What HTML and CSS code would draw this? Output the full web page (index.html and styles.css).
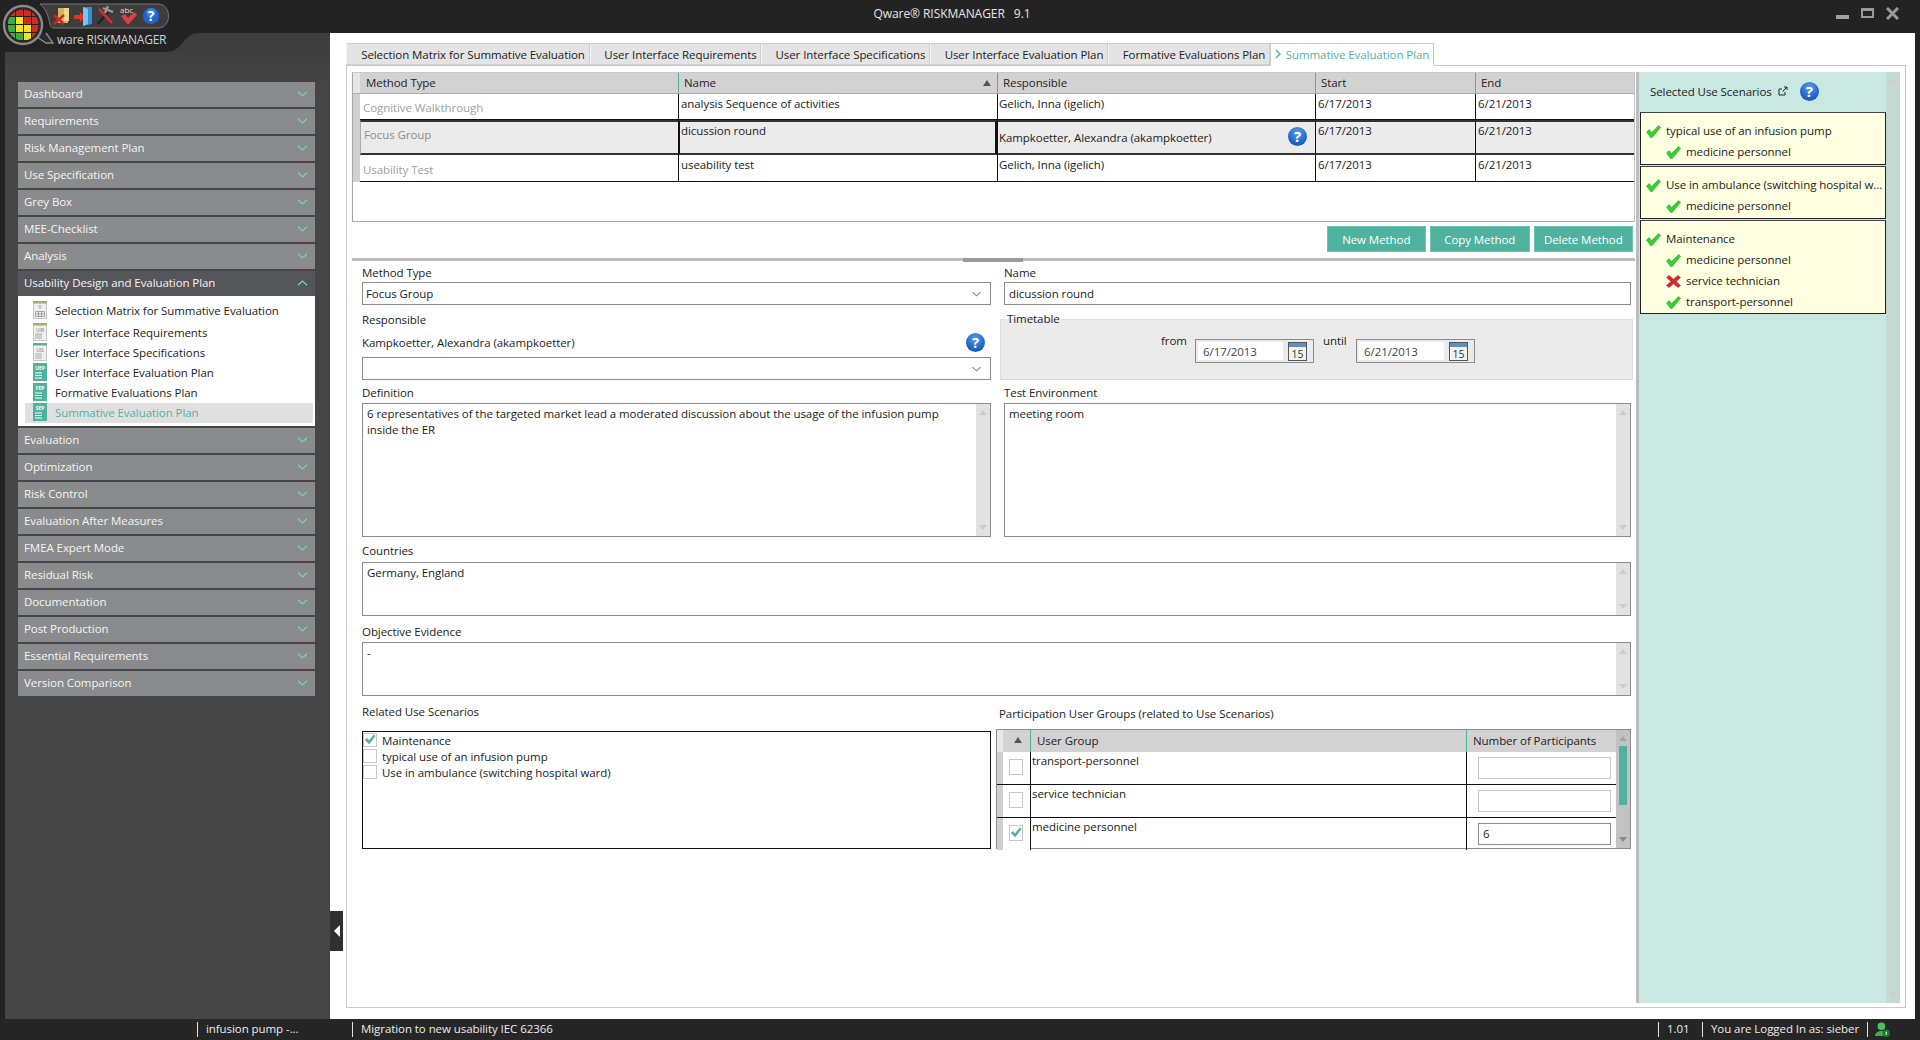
FILE: index.html
```html
<!DOCTYPE html>
<html lang="en">
<head>
    <meta charset="UTF-8">
    <title>Qware RISKMANAGER 9.1</title>
    <link rel="stylesheet" href="styles.css">
</head>
<body>
    <svg class="sprite">
        <symbol id="ok" viewBox="0 0 15 13"><path d="M0.5 7 L3.2 4.6 L5.6 7.6 L12.6 0.5 L14.6 2.4 L6.2 12.6 L4.6 12.6 Z" fill="#34d034" stroke="#1c9a1c" stroke-width=".5"/></symbol>
        <symbol id="bad" viewBox="0 0 15 13"><path d="M0.5 2.5 L3 0.5 L7.5 4.2 L12 0.5 L14.5 2.5 L10 6.5 L14.5 10.5 L12 12.5 L7.5 8.8 L3 12.5 L0.5 10.5 L5 6.5 Z" fill="#d8282c" stroke="#9c1c20" stroke-width=".5"/></symbol>
        <symbol id="tick" viewBox="0 0 14 14"><path d="M1 7 L3.5 4.8 L5.8 7.4 L11.5 0.5 L13.5 2.2 L6 12 Z" fill="#4fb29f"/></symbol>
        <symbol id="down" viewBox="0 0 10 6"><path d="M0.5 0.8 L5 5 L9.5 0.8" fill="none" stroke="currentColor" stroke-width="1.2"/></symbol>
        <symbol id="up" viewBox="0 0 10 6"><path d="M0.5 5.2 L5 1 L9.5 5.2" fill="none" stroke="currentColor" stroke-width="1.2"/></symbol>
    </svg>

    <div class="app">
        <header class="titlebar">
            <span class="title">Qware® RISKMANAGER &nbsp; 9.1</span>
            <div class="winbtns">
                <span class="win-min"></span>
                <span class="win-max"></span>
                <svg class="win-close" viewBox="0 0 13 13"><path d="M1 1 L12 12 M12 1 L1 12" stroke="#9a9a9a" stroke-width="3"/></svg>
            </div>
        </header>

        <div class="main">
            <aside class="sidebar">
                <nav class="menu">
                    <div class="menu-item">Dashboard<svg class="chev"><use href="#down"/></svg></div>
                    <div class="menu-item">Requirements<svg class="chev"><use href="#down"/></svg></div>
                    <div class="menu-item">Risk Management Plan<svg class="chev"><use href="#down"/></svg></div>
                    <div class="menu-item">Use Specification<svg class="chev"><use href="#down"/></svg></div>
                    <div class="menu-item">Grey Box<svg class="chev"><use href="#down"/></svg></div>
                    <div class="menu-item">MEE-Checklist<svg class="chev"><use href="#down"/></svg></div>
                    <div class="menu-item">Analysis<svg class="chev"><use href="#down"/></svg></div>
                    <div class="menu-item open">Usability Design and Evaluation Plan<svg class="chev"><use href="#up"/></svg></div>
                    <div class="submenu">
                        <div class="sub-item">
                            <svg class="doc" viewBox="0 0 14 18"><rect x=".5" y=".5" width="13" height="17" fill="#f0f0f0" stroke="#c4c4c4"/><rect width="14" height="2.5" fill="#9db36c"/><text x="7" y="8" font-size="5" text-anchor="middle" fill="#777">X</text><path d="M2.5 10.5 H11.5 V15.5 H2.5 Z M2.5 13 H11.5 M5.5 10.5 V15.5 M8.5 10.5 V15.5" fill="none" stroke="#888" stroke-width=".7"/></svg>
                            Selection Matrix for Summative Evaluation
                        </div>
                        <div class="sub-item">
                            <svg class="doc" viewBox="0 0 14 18"><rect x=".5" y=".5" width="13" height="17" fill="#f0f0f0" stroke="#c4c4c4"/><rect width="14" height="2.5" fill="#9db36c"/><text x="7" y="8.5" font-size="5" text-anchor="middle" fill="#777">UIR</text><path d="M2 11 H9 M2 13 H9 M2 15 H9" stroke="#aaa"/></svg>
                            User Interface Requirements
                        </div>
                        <div class="sub-item">
                            <svg class="doc" viewBox="0 0 14 18"><rect x=".5" y=".5" width="13" height="17" fill="#f0f0f0" stroke="#c4c4c4"/><rect width="14" height="2.5" fill="#4fb29f"/><text x="7" y="8.5" font-size="5" text-anchor="middle" fill="#777">UIS</text><path d="M2 11 H9 M2 13 H9 M2 15 H9" stroke="#aaa"/></svg>
                            User Interface Specifications
                        </div>
                        <div class="sub-item">
                            <svg class="doc" viewBox="0 0 14 18"><rect width="14" height="18" fill="#4fb29f"/><text x="7" y="7" font-size="5" font-weight="700" text-anchor="middle" fill="#fff">UEP</text><path d="M2 10 H9 M2 12.5 H9 M2 15 H9" stroke="#fff"/></svg>
                            User Interface Evaluation Plan
                        </div>
                        <div class="sub-item">
                            <svg class="doc" viewBox="0 0 14 18"><rect width="14" height="18" fill="#4fb29f"/><text x="7" y="7" font-size="5" font-weight="700" text-anchor="middle" fill="#fff">FEP</text><path d="M2 10 H9 M2 12.5 H9 M2 15 H9" stroke="#fff"/></svg>
                            Formative Evaluations Plan
                        </div>
                        <div class="sub-item current">
                            <svg class="doc" viewBox="0 0 14 18"><rect width="14" height="18" fill="#4fb29f"/><text x="7" y="7" font-size="5" font-weight="700" text-anchor="middle" fill="#fff">SEP</text><path d="M2 10 H9 M2 12.5 H9 M2 15 H9" stroke="#fff"/></svg>
                            Summative Evaluation Plan
                        </div>
                    </div>
                    <div class="menu-item">Evaluation<svg class="chev"><use href="#down"/></svg></div>
                    <div class="menu-item">Optimization<svg class="chev"><use href="#down"/></svg></div>
                    <div class="menu-item">Risk Control<svg class="chev"><use href="#down"/></svg></div>
                    <div class="menu-item">Evaluation After Measures<svg class="chev"><use href="#down"/></svg></div>
                    <div class="menu-item">FMEA Expert Mode<svg class="chev"><use href="#down"/></svg></div>
                    <div class="menu-item">Residual Risk<svg class="chev"><use href="#down"/></svg></div>
                    <div class="menu-item">Documentation<svg class="chev"><use href="#down"/></svg></div>
                    <div class="menu-item">Post Production<svg class="chev"><use href="#down"/></svg></div>
                    <div class="menu-item">Essential Requirements<svg class="chev"><use href="#down"/></svg></div>
                    <div class="menu-item">Version Comparison<svg class="chev"><use href="#down"/></svg></div>
                </nav>
            </aside>

            <section class="workspace">
                <div class="tabs">
                    <div class="tab w244">Selection Matrix for Summative Evaluation</div>
                    <div class="tab w171">User Interface Requirements</div>
                    <div class="tab w169">User Interface Specifications</div>
                    <div class="tab w178">User Interface Evaluation Plan</div>
                    <div class="tab w162">Formative Evaluations Plan</div>
                    <div class="tab active"><svg class="tab-arrow" viewBox="0 0 6 10"><path d="M1 1 L5 5 L1 9" fill="none" stroke="#4fb29f" stroke-width="1.4"/></svg>Summative Evaluation Plan</div>
                </div>

                <div class="panel">
                    <div class="left">
                        <div class="methods">
                            <div class="mrow mhead">
                                <div class="band"></div>
                                <div class="hcell first">Method Type</div>
                                <div class="hcell">Name<span class="sort"></span></div>
                                <div class="hcell">Responsible</div>
                                <div class="hcell">Start</div>
                                <div class="hcell">End</div>
                            </div>
                            <div class="mrow r1">
                                <div class="band"></div>
                                <div class="cell type t1">Cognitive Walkthrough</div>
                                <div class="cell">analysis Sequence of activities</div>
                                <div class="cell resp">Gelich, Inna (igelich)</div>
                                <div class="cell">6/17/2013</div>
                                <div class="cell">6/21/2013</div>
                            </div>
                            <div class="mrow r2">
                                <div class="band"></div>
                                <div class="cell type t2">Focus Group</div>
                                <div class="cell name-sel">dicussion round</div>
                                <div class="cell resp resp-help">Kampkoetter, Alexandra (akampkoetter)<span class="help">?</span></div>
                                <div class="cell">6/17/2013</div>
                                <div class="cell">6/21/2013</div>
                            </div>
                            <div class="mrow r3">
                                <div class="band"></div>
                                <div class="cell type t3">Usability Test</div>
                                <div class="cell">useability test</div>
                                <div class="cell resp">Gelich, Inna (igelich)</div>
                                <div class="cell">6/17/2013</div>
                                <div class="cell">6/21/2013</div>
                            </div>
                        </div>

                        <div class="actions">
                            <button class="btn">New Method</button>
                            <button class="btn">Copy Method</button>
                            <button class="btn">Delete Method</button>
                        </div>

                        <div class="hsplit"><span class="hsplit-grip"></span></div>

                        <div class="form">
                            <div class="form-top">
                                <div>
                                    <div class="lbl">Method Type</div>
                                    <div class="combo">Focus Group<svg class="combo-arrow"><use href="#down"/></svg></div>
                                </div>
                                <div>
                                    <div class="lbl">Name</div>
                                    <div class="input">dicussion round</div>
                                </div>

                                <div>
                                    <div class="lbl resp-lbl">Responsible</div>
                                    <div class="resp-line">Kampkoetter, Alexandra (akampkoetter)<span class="help">?</span></div>
                                    <div class="combo"><svg class="combo-arrow"><use href="#down"/></svg></div>
                                </div>
                                <fieldset class="timetable">
                                    <legend>Timetable</legend>
                                    <span class="date-lbl from">from</span>
                                    <div class="date"><span class="date-val">6/17/2013</span><span class="cal">15</span></div>
                                    <span class="date-lbl until">until</span>
                                    <div class="date"><span class="date-val">6/21/2013</span><span class="cal">15</span></div>
                                </fieldset>

                                <div>
                                    <div class="lbl def-lbl">Definition</div>
                                    <div class="memo h134">
                                        <div class="memo-text">6 representatives of the targeted market lead a moderated discussion about the usage of the infusion pump<br>inside the ER</div>
                                        <div class="vbar"><i class="arr-up"></i><i class="arr-down"></i></div>
                                    </div>
                                </div>
                                <div>
                                    <div class="lbl def-lbl">Test Environment</div>
                                    <div class="memo h134">
                                        <div class="memo-text">meeting room</div>
                                        <div class="vbar"><i class="arr-up"></i><i class="arr-down"></i></div>
                                    </div>
                                </div>
                            </div>

                            <div class="lbl countries-lbl">Countries</div>
                            <div class="memo h54">
                                <div class="memo-text">Germany, England</div>
                                <div class="vbar"><i class="arr-up"></i><i class="arr-down"></i></div>
                            </div>

                            <div class="lbl evidence-lbl">Objective Evidence</div>
                            <div class="memo h54">
                                <div class="memo-text">-</div>
                                <div class="vbar"><i class="arr-up"></i><i class="arr-down"></i></div>
                            </div>

                            <div class="form-bottom">
                                <div>
                                    <div class="lbl scen-lbl">Related Use Scenarios</div>
                                    <div class="scen-list">
                                        <div class="scen"><span class="box"><svg><use href="#tick"/></svg></span>Maintenance</div>
                                        <div class="scen"><span class="box"></span>typical use of an infusion pump</div>
                                        <div class="scen"><span class="box"></span>Use in ambulance (switching hospital ward)</div>
                                    </div>
                                </div>
                                <div>
                                    <div class="lbl part-lbl">Participation User Groups (related to Use Scenarios)</div>
                                    <div class="groups">
                                        <div class="groups-body">
                                            <div class="grow ghead">
                                                <div class="gsort"><span class="sort"></span></div>
                                                <div class="gh-name">User Group</div>
                                                <div class="gh-num">Number of Participants</div>
                                            </div>
                                            <div class="grow gline">
                                                <div class="gcheck"><span class="box big"></span></div>
                                                <div class="gname">transport-personnel</div>
                                                <div class="gnum"><span class="num-box"></span></div>
                                            </div>
                                            <div class="grow gline">
                                                <div class="gcheck"><span class="box big"></span></div>
                                                <div class="gname">service technician</div>
                                                <div class="gnum"><span class="num-box"></span></div>
                                            </div>
                                            <div class="grow gline last">
                                                <div class="gcheck"><span class="box big"><svg><use href="#tick"/></svg></span></div>
                                                <div class="gname">medicine personnel</div>
                                                <div class="gnum"><span class="num-box filled">6</span></div>
                                            </div>
                                        </div>
                                        <div class="gbar"><i class="arr-up"></i><span class="gthumb"></span><i class="arr-down"></i></div>
                                    </div>
                                </div>
                            </div>
                        </div>
                    </div>

                    <div class="vsplit"></div>

                    <div class="scenarios">
                        <div class="scen-body">
                            <div class="scen-head">Selected Use Scenarios
                                <svg class="ext" viewBox="0 0 10 10"><path d="M7 6 V9 H1 V3 H4 M4.5 5.5 L9 1 M6 1 H9 V4" fill="none" stroke="#222"/></svg>
                                <span class="help">?</span>
                            </div>
                            <div class="card">
                                <div class="c-line"><svg class="mark"><use href="#ok"/></svg>typical use of an infusion pump</div>
                                <div class="c-line sub"><svg class="mark"><use href="#ok"/></svg>medicine personnel</div>
                            </div>
                            <div class="card">
                                <div class="c-line"><svg class="mark"><use href="#ok"/></svg>Use in ambulance (switching hospital w...</div>
                                <div class="c-line sub"><svg class="mark"><use href="#ok"/></svg>medicine personnel</div>
                            </div>
                            <div class="card">
                                <div class="c-line"><svg class="mark"><use href="#ok"/></svg>Maintenance</div>
                                <div class="c-line sub"><svg class="mark"><use href="#ok"/></svg>medicine personnel</div>
                                <div class="c-line sub"><svg class="mark"><use href="#bad"/></svg>service technician</div>
                                <div class="c-line sub"><svg class="mark"><use href="#ok"/></svg>transport-personnel</div>
                            </div>
                        </div>
                        <div class="scen-bar"><i class="arr-up"></i><i class="arr-down"></i></div>
                    </div>
                </div>
            </section>
        </div>

        <footer class="statusbar">
            <span class="st st-proj">infusion pump -...</span>
            <span class="st">Migration to new usability IEC 62366</span>
            <span class="st st-ver">1.01</span>
            <span class="st st-user">You are Logged In as: sieber</span>
            <span class="st st-icon">
                <svg viewBox="0 0 14 14"><circle cx="6" cy="4" r="3.6" fill="#4cc05a"/><path d="M0 13 C0 7 12 7 12 13 Z" fill="#3fae4a"/><circle cx="10.5" cy="10.5" r="3.4" fill="#1c7a2a"/><path d="M10.5 9 V12" stroke="#fff"/></svg>
            </span>
        </footer>

        <!-- logo and quick bar sit over the title bar and the sidebar corner -->
        <svg class="corner" viewBox="0 0 195 20"><path d="M0 0 H195 C176 0 180 19 160 19 H0 Z" fill="#232323"/></svg>
        <svg class="logo" viewBox="0 0 175 48">
            <defs><clipPath id="disc"><circle cx="23" cy="25" r="15.5"/></clipPath></defs>
            <path d="M40 4 H158 C172 4 172 28 158 28 H54 C50 28 50 24 49 20 C47 12 44 7 40 4 Z" fill="#3d3d3d" stroke="#777"/>
            <path d="M37 37 L46 43 H53 L46 33" fill="#2a2a2a" stroke="#8a8a8a" stroke-width="1.4"/>
            <circle cx="23" cy="25" r="19" fill="#2a2a2a" stroke="#8a8a8a" stroke-width="2.4"/>
            <g clip-path="url(#disc)">
                <rect x="7" y="9" width="32" height="32" fill="#222"/>
                <rect x="8" y="9" width="7" height="7" fill="#d42a24"/><rect x="16" y="9" width="7" height="7" fill="#d42a24"/><rect x="24" y="9" width="7" height="7" fill="#d42a24"/><rect x="32" y="9" width="7" height="7" fill="#d42a24"/>
                <rect x="8" y="17" width="7" height="7" fill="#3fae3a"/><rect x="16" y="17" width="7" height="7" fill="#f5e41a"/><rect x="24" y="17" width="7" height="7" fill="#d42a24"/><rect x="32" y="17" width="7" height="7" fill="#d42a24"/>
                <rect x="8" y="25" width="7" height="7" fill="#3fae3a"/><rect x="16" y="25" width="7" height="7" fill="#f5e41a"/><rect x="24" y="25" width="7" height="7" fill="#f5e41a"/><rect x="32" y="25" width="7" height="7" fill="#d42a24"/>
                <rect x="8" y="33" width="7" height="7" fill="#3fae3a"/><rect x="16" y="33" width="7" height="7" fill="#3fae3a"/><rect x="24" y="33" width="7" height="7" fill="#f5e41a"/><rect x="32" y="33" width="7" height="7" fill="#d42a24"/>
            </g>
            <path d="M58 8 H68 V23 H58 Z" fill="#d8b25e"/><path d="M64 8 H69 V21 H64 Z" fill="#f0d58c"/>
            <path d="M54 15 L64 24 M64 15 L54 24" stroke="#cc2a2a" stroke-width="2.6"/>
            <path d="M74 15 H80 V12 L85 17 L80 22 V19 H74 Z" fill="#e8302c"/>
            <path d="M83 7 H92 V24 L83 26 Z" fill="#2f8fd8"/><path d="M83 7 L88 9 V24 L83 26 Z" fill="#7cc4ee"/>
            <path d="M98 24 L108 12" stroke="#222" stroke-width="2.4"/><path d="M103 8 L113 12 M108 6 L105 13" stroke="#999" stroke-width="2.4"/>
            <path d="M99 9 L112 23" stroke="#d82c2c" stroke-width="2.6"/>
            <text x="120" y="13" font-family="Open Sans, sans-serif" font-size="8" fill="#ddd">abc</text>
            <path d="M121 16 L125 14 L128 18 L134 12 L137 15 L128 25 Z" fill="#e23c44"/>
            <circle cx="151" cy="16" r="8.2" fill="#1f62c8"/><circle cx="151" cy="13" r="5" fill="#4d8ee6" opacity=".6"/>
            <text x="151" y="21" font-family="Open Sans, sans-serif" font-size="14" font-weight="700" text-anchor="middle" fill="#fff">?</text>
        </svg>
        <span class="brand">ware RISKMANAGER</span>

        <div class="collapse"><span class="collapse-arrow"></span></div>
    </div>
</body>
</html>
```

FILE: styles.css
```css
* {
    box-sizing: border-box;
}
html, body {
    margin: 0;
    padding: 0;
    width: 1920px;
    height: 1040px;
    overflow: hidden;
}
body {
    font-family: "Open Sans", "Liberation Sans", sans-serif;
    font-size: 11.5px;
    letter-spacing: -0.07px;
    color: #222;
    background: #232323;
}
.sprite {
    position: absolute;
    width: 0;
    height: 0;
}
.app {
    position: relative;
    display: grid;
    grid-template-rows: 33px 986px 21px;
    width: 1920px;
    height: 1040px;
}

/* title bar */
.titlebar {
    position: relative;
    display: flex;
    align-items: center;
    justify-content: center;
    background: #232323;
    color: #e6e6e6;
    padding-right: 16px;
    padding-bottom: 7px;
}
.title {
    font-size: 12px;
}
.winbtns {
    position: absolute;
    left: 1836px;
    top: 7px;
    display: flex;
    align-items: flex-start;
    gap: 12px;
}
.win-min {
    width: 13px;
    height: 4px;
    margin-top: 8px;
    background: #a0a0a0;
}
.win-max {
    width: 13px;
    height: 10px;
    margin-top: 1px;
    background: #232323;
    border: 2px solid #9a9a9a;
    border-top-width: 3px;
}
.win-close {
    width: 13px;
    height: 13px;
}

/* sidebar */
.main {
    display: flex;
    min-height: 0;
}
.sidebar {
    flex: none;
    width: 325px;
    margin-left: 5px;
    background: linear-gradient(#3c3c3c, #464646 60px);
    padding: 49px 15px 0 13px;
}
.menu-item {
    position: relative;
    display: flex;
    align-items: center;
    justify-content: space-between;
    height: 25px;
    margin-bottom: 2px;
    padding: 0 7px 3px 6px;
    background: #898b8c;
    color: #f5f5f5;
}
.menu-item.open {
    margin-bottom: 0;
    background: #55565a;
}
.chev {
    width: 11px;
    height: 6px;
    margin-top: 2px;
    color: #7ed0be;
}
.submenu {
    height: 130px;
    margin-bottom: 2px;
    padding: 3px 2px 0 7px;
    background: #fff;
    color: #222;
}
.sub-item {
    display: flex;
    align-items: center;
    height: 20px;
    padding: 0 0 2px 8px;
}
.sub-item:first-child {
    height: 24px;
}
.sub-item.current {
    background: #e0e0e0;
    color: #4fb29f;
}
.doc {
    width: 14px;
    height: 18px;
    margin-right: 8px;
    flex: none;
    font-family: "Open Sans", sans-serif;
}

/* workspace */
.workspace {
    flex: 1;
    background: #fff;
    padding: 10px 9px 11px 16px;
    margin-right: 5px;
    display: flex;
    flex-direction: column;
    min-width: 0;
}
.tabs {
    display: flex;
    height: 22px;
    position: relative;
}
.tab {
    display: flex;
    align-items: center;
    justify-content: center;
    height: 22px;
    padding: 0 0 0 10px;
    background: #e4e4e4;
    border: 1px solid #d0d0d0;
    border-left-color: #f4f4f4;
    white-space: pre;
}
.w244 { width: 244px; }
.w171 { width: 171px; }
.w169 { width: 169px; }
.w178 { width: 178px; }
.w162 { width: 162px; }
.tab.active {
    width: 164px;
    height: 23px;
    padding: 0 0 1px 0;
    background: #fff;
    border-color: #c8c8c8;
    border-bottom-color: #fff;
    color: #4fb29f;
}
.tab-arrow {
    width: 6px;
    height: 10px;
    margin-right: 5px;
}
.panel {
    flex: 1;
    display: flex;
    min-height: 0;
    border: 1px solid #c8c8c8;
    padding: 6px 5px 4px 5px;
}
.left {
    width: 1283px;
    flex: none;
    display: flex;
    flex-direction: column;
}

/* method grid */
.methods {
    height: 150px;
    width: 1283px;
    border: 1px solid #a8a8a8;
    border-top-color: #c8c8c8;
    border-right-color: #c0c0c0;
}
.mrow {
    display: grid;
    grid-template-columns: 7px 318px 319px 318px 160px 159px;
}
.mhead {
    height: 21px;
    background: #d2d2d2;
    border-bottom: 1px solid #aaa;
}
.mhead .band {
    background: #e6e6e6;
}
.hcell {
    position: relative;
    display: flex;
    align-items: center;
    padding: 0 0 1px 5px;
    border-left: 1px solid #4fb29f;
}
.hcell.first {
    border-left: none;
    padding-left: 6px;
}
.sort {
    width: 0;
    height: 0;
    border-left: 4px solid transparent;
    border-right: 4px solid transparent;
    border-bottom: 6px solid #555;
}
.hcell .sort {
    position: absolute;
    right: 6px;
    top: 7px;
}
.band {
    background: #d0d0d0;
}
.cell {
    padding: 2px 0 0 2px;
    border-left: 1px solid #111;
    border-bottom: 1px solid #111;
    white-space: nowrap;
}
.cell.type {
    border-left: none;
    color: #a0a0a0;
    padding-left: 3px;
}
.r1 {
    height: 26px;
}
.r2 {
    height: 35px;
    background: #ebebeb;
}
.r2 .cell {
    padding-top: 1px;
    border-bottom: 2px solid #333;
    border-top: 2px solid #333;
}
.r2 .cell.type {
    color: #8c8c8c;
    border-left: 1px solid #aaa;
    padding-top: 5px;
}
.r3 {
    height: 27px;
}
.t1 {
    padding-top: 6px;
}
.cell.t3 {
    padding-top: 7px;
}
.cell.resp {
    padding: 2px 0 0 1px;
}
.r2 .cell.resp {
    padding-top: 8px;
}
.resp-help {
    position: relative;
}
.resp-help .help {
    position: absolute;
    left: 290px;
    top: 5px;
}
.name-sel {
    border-left-width: 2px !important;
    border-right: 2px solid #111;
    padding-left: 1px;
}
.help {
    display: inline-flex;
    align-items: center;
    justify-content: center;
    width: 19px;
    height: 19px;
    border-radius: 50%;
    background: radial-gradient(circle at 50% 30%, #5c9cec, #1a5cc4 70%);
    color: #fff;
    font-size: 15px;
    font-weight: 700;
    letter-spacing: 0;
    line-height: 19px;
}

/* buttons */
.actions {
    display: flex;
    justify-content: flex-end;
    gap: 4px;
    margin-top: 4px;
    padding-right: 2px;
}
.btn {
    width: 99.5px;
    height: 26px;
    border: 1px solid #6cc4b2;
    background: #4fb29f;
    color: #fff;
    font: inherit;
    letter-spacing: inherit;
    padding: 0;
}
.hsplit {
    position: relative;
    height: 3px;
    margin-top: 6px;
    width: 1283px;
    background: #bdbdbd;
}
.hsplit-grip {
    position: absolute;
    left: 611px;
    top: 0;
    width: 60px;
    height: 4px;
    background: #9a9a9a;
}

/* form */
.form {
    padding: 5px 0 0 10px;
    width: 1279px;
}
.lbl {
    height: 16px;
    line-height: 14px;
    white-space: nowrap;
}
.form-top {
    display: grid;
    grid-template-columns: 629px 627px;
    column-gap: 13px;
}
.combo, .input {
    position: relative;
    display: flex;
    align-items: center;
    height: 23px;
    padding: 0 0 0 3px;
    border: 1px solid #8c8c8c;
    background: #fff;
}
.input {
    padding-left: 4px;
}
.combo-arrow {
    position: absolute;
    right: 9px;
    top: 8px;
    width: 9px;
    height: 6px;
    color: #888;
}
.resp-lbl {
    margin-top: 8px;
}
.resp-line {
    display: flex;
    align-items: center;
    justify-content: space-between;
    height: 16px;
    margin: 5px 6px 7px 0;
}
.def-lbl {
    margin: 6px 0 1px;
}
.timetable {
    display: flex;
    align-items: flex-start;
    height: 69px;
    margin: 6px -2px 0 -4px;
    padding: 12px 0 0 160px;
    border: 1px solid #dcdcdc;
    background: #ebebeb;
}
.timetable legend {
    padding: 0 3px;
    margin-left: -157px;
    line-height: 16px;
}
.date-lbl {
    margin-top: -6px;
    line-height: 16px;
}
.from {
    width: 34px;
}
.until {
    width: 33px;
    margin-left: 9px;
}
.date {
    display: flex;
    align-items: center;
    justify-content: space-between;
    width: 119px;
    height: 24px;
    padding: 0 6px 0 2px;
    border: 1px solid #8c8c8c;
}
.date-val {
    width: 85px;
    height: 18px;
    line-height: 20px;
    padding-left: 5px;
    background: #fff;
    color: #444;
}
.cal {
    width: 19px;
    height: 19px;
    padding-top: 4px;
    border: 1px solid #555;
    background: linear-gradient(#5d8fc8 4px, #f2f2f2 4px);
    color: #333;
    font-size: 10.5px;
    letter-spacing: 0;
    line-height: 14px;
    text-align: center;
}
.memo {
    display: flex;
    border: 1px solid #8c8c8c;
    background: #fff;
}
.h134 {
    height: 134px;
}
.h54 {
    height: 54px;
}
.memo-text {
    flex: 1;
    padding: 2px 4px;
    line-height: 16px;
}
.vbar {
    width: 14px;
    display: flex;
    flex-direction: column;
    justify-content: space-between;
    align-items: center;
    padding: 6px 0;
    background: #e2e2e2;
}
.arr-up, .arr-down {
    width: 0;
    height: 0;
    border-left: 4px solid transparent;
    border-right: 4px solid transparent;
}
.arr-up {
    border-bottom: 5px solid #cdcdcd;
}
.arr-down {
    border-top: 5px solid #cdcdcd;
}
.countries-lbl {
    margin: 7px 0 2px;
}
.evidence-lbl {
    margin: 9px 0 1px;
}
.form-bottom {
    display: grid;
    grid-template-columns: 629px 635px;
    column-gap: 5px;
}
.scen-lbl {
    margin: 9px 0 10px;
}
.part-lbl {
    margin: 11px 0 6px 3px;
}
.scen-list {
    height: 118px;
    border: 1px solid #111;
}
.scen {
    display: flex;
    align-items: center;
    height: 16px;
}
.box {
    display: inline-block;
    width: 14px;
    height: 14px;
    margin-right: 5px;
    border: 1px solid #c8c8c8;
    background: #fff;
    flex: none;
}
.box svg {
    display: block;
    width: 12px;
    height: 12px;
}
.box.big {
    width: 14px;
    height: 16px;
    margin: 0;
}
.box.big svg {
    margin-top: 1px;
}

/* user groups */
.groups {
    display: flex;
    height: 120px;
    border: 1px solid #8c8c8c;
}
.groups-body {
    flex: 1;
    min-width: 0;
}
.grow {
    display: grid;
    grid-template-columns: 33px 436px 151px;
}
.ghead {
    height: 22px;
    background: #d2d2d2;
}
.gsort {
    display: flex;
    align-items: center;
    justify-content: center;
    padding-left: 8px;
    padding-bottom: 3px;
    background: linear-gradient(90deg, #e8e8e8 6px, #d2d2d2 6px);
}
.gh-name, .gh-num {
    display: flex;
    align-items: center;
    padding: 0 0 2px 6px;
    border-left: 1px solid #4fb29f;
}
.gline {
    height: 33px;
    border-bottom: 1px solid #111;
}
.gline.last {
    height: 32px;
    border-bottom: none;
}
.gcheck {
    padding: 7px 0 0 12px;
    background: linear-gradient(90deg, #d0d0d0 6px, #fff 6px);
}
.gname {
    padding-left: 1px;
    padding-top: 1px;
    border-left: 1px solid #111;
}
.gnum {
    padding: 5px 0 0 11px;
    border-left: 1px solid #111;
}
.num-box {
    display: block;
    width: 133px;
    height: 22px;
    line-height: 20px;
    padding-left: 4px;
    border: 1px solid #c8c8c8;
    background: #fff;
}
.num-box.filled {
    border-color: #8c8c8c;
}
.gbar {
    width: 14px;
    display: flex;
    flex-direction: column;
    align-items: center;
    padding: 6px 0;
    background: #c2c2c2;
}
.gbar .arr-up {
    border-bottom-color: #a4a4a4;
}
.gbar .arr-down {
    border-top-color: #8a8a8a;
    margin-top: auto;
}
.gthumb {
    width: 8px;
    height: 59px;
    margin-top: 5px;
    background: #4fb29f;
}

/* right panel */
.vsplit {
    width: 3px;
    margin-left: 1px;
    background: #bdbdbd;
    flex: none;
}
.scenarios {
    flex: 1;
    display: flex;
    background: #c8e8e1;
}
.scen-body {
    width: 247px;
    flex: none;
}
.scen-head {
    display: flex;
    align-items: center;
    height: 40px;
    padding: 0 0 2px 11px;
}
.ext {
    width: 10px;
    height: 10px;
    margin-left: 6px;
    margin-right: 12px;
}
.card {
    margin: 0 0 1px 1px;
    padding: 7px 0 0 5px;
    border: 1px solid #222;
    border-top-color: #444;
    background: #ffffe1;
    white-space: nowrap;
}
.card:nth-of-type(2), .card:nth-of-type(3) {
    height: 53px;
}
.card:nth-of-type(4) {
    height: 94px;
}
.c-line {
    display: flex;
    align-items: center;
    height: 21px;
}
.c-line.sub {
    padding-left: 20px;
}
.mark {
    width: 15px;
    height: 13px;
    margin: 2px 5px 0 0;
    flex: none;
}
.scen-bar {
    width: 14px;
    margin-left: auto;
    display: flex;
    flex-direction: column;
    justify-content: space-between;
    align-items: center;
    padding: 6px 0;
    background: #c4d8d4;
}

/* status bar */
.statusbar {
    display: flex;
    align-items: center;
    background: #262626;
    color: #ececec;
    padding-left: 197px;
}
.st {
    height: 15px;
    line-height: 14px;
    padding-left: 8px;
    border-left: 1px solid #e0e0e0;
    white-space: nowrap;
}
.st-proj {
    width: 155px;
}
.st-ver {
    margin-left: auto;
    width: 44px;
}
.st-user {
    width: 165px;
}
.st-icon {
    width: 53px;
    padding-left: 7px;
}
.st-icon svg {
    display: block;
    width: 15px;
    height: 15px;
}

/* overlays */
.corner {
    position: absolute;
    left: 5px;
    top: 33px;
    width: 195px;
    height: 20px;
}
.logo {
    position: absolute;
    left: 0;
    top: 0;
    width: 175px;
    height: 48px;
}
.brand {
    position: absolute;
    left: 57px;
    top: 31px;
    font-size: 12px;
    letter-spacing: -0.25px;
    color: #d0d0d0;
}
.collapse {
    position: absolute;
    left: 330px;
    top: 911px;
    width: 13px;
    height: 40px;
    display: flex;
    align-items: center;
    justify-content: center;
    background: #303030;
}
.collapse-arrow {
    width: 0;
    height: 0;
    border-top: 6px solid transparent;
    border-bottom: 6px solid transparent;
    border-right: 6px solid #fff;
}
```
